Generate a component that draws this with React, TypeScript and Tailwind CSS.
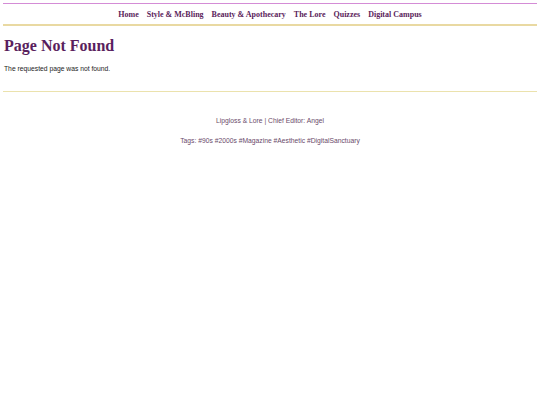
export default function App() {
  const links = ['Home', 'Style & McBling', 'Beauty & Apothecary', 'The Lore', 'Quizzes', 'Digital Campus'];
  return (
    <div className="min-h-screen bg-white px-[3px] pt-[3px]">
      {/* Nav */}
      <header>
        <div className="h-px bg-[#d48cd6]" />
        <nav className="flex justify-center gap-[8px] pt-[5px] pb-[4px] font-['Liberation_Serif',Georgia,serif] text-[8px] font-bold leading-[11px] text-[#5b1d5b]">
          {links.map((l) => (
            <a key={l} href="#" className="whitespace-nowrap">
              {l}
            </a>
          ))}
        </nav>
        <div className="h-[2px] bg-[#e9d9a2]" />
      </header>

      <main className="px-px pt-[10px] pb-[18px]">
        <h1 className="font-['Liberation_Serif',Georgia,serif] text-[16px] font-bold leading-[20px] text-[#5a1f5e]">
          Page Not Found
        </h1>
        <p className="mt-[8px] font-['Liberation_Sans',Arial,sans-serif] text-[6.75px] leading-[9px] text-[#222]">
          The requested page was not found.
        </p>
      </main>

      <div className="h-px bg-[#ebe2ad]" />

      <footer className="pt-[24px] text-center font-['Liberation_Sans',Arial,sans-serif] text-[6.75px] leading-[9px] text-[#6a4a6a]">
        <p>Lipgloss &amp; Lore | Chief Editor: Angel</p>
        <p className="mt-[11px]">Tags: #90s #2000s #Magazine #Aesthetic #DigitalSanctuary</p>
      </footer>
    </div>
  );
}
